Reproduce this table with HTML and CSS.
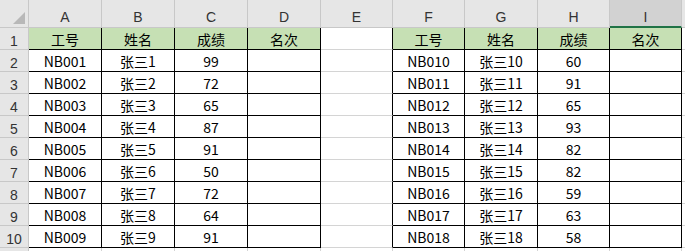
FILE: index.html
```html
<!DOCTYPE html>
<html>
<head>
<meta charset="utf-8">
<link rel="stylesheet" href="styles.css">
</head>
<body>
<div class="sheet">
  <div class="c ch corner"><svg class="tri" width="12" height="12" viewBox="0 0 12 12"><polygon points="12,0 12,12 0,12" fill="#b8b8b8"/></svg></div>
  <div class="c ch">A</div><div class="c ch">B</div><div class="c ch">C</div><div class="c ch">D</div><div class="c ch">E</div><div class="c ch">F</div><div class="c ch">G</div><div class="c ch">H</div><div class="c ch sel">I</div><div class="c ch"></div>

  <div class="c rh">1</div><div class="c t g">工号</div><div class="c t g">姓名</div><div class="c t g">成绩</div><div class="c t g">名次</div><div class="c er"></div><div class="c t g">工号</div><div class="c t g">姓名</div><div class="c t g">成绩</div><div class="c t g">名次</div><div class="c"></div>

  <div class="c rh">2</div><div class="c t">NB001</div><div class="c t">张三1</div><div class="c t">99</div><div class="c t"></div><div class="c er"></div><div class="c t">NB010</div><div class="c t">张三10</div><div class="c t">60</div><div class="c t"></div><div class="c"></div>
  <div class="c rh">3</div><div class="c t">NB002</div><div class="c t">张三2</div><div class="c t">72</div><div class="c t"></div><div class="c er"></div><div class="c t">NB011</div><div class="c t">张三11</div><div class="c t">91</div><div class="c t"></div><div class="c"></div>
  <div class="c rh">4</div><div class="c t">NB003</div><div class="c t">张三3</div><div class="c t">65</div><div class="c t"></div><div class="c er"></div><div class="c t">NB012</div><div class="c t">张三12</div><div class="c t">65</div><div class="c t"></div><div class="c"></div>
  <div class="c rh">5</div><div class="c t">NB004</div><div class="c t">张三4</div><div class="c t">87</div><div class="c t"></div><div class="c er"></div><div class="c t">NB013</div><div class="c t">张三13</div><div class="c t">93</div><div class="c t"></div><div class="c"></div>
  <div class="c rh">6</div><div class="c t">NB005</div><div class="c t">张三5</div><div class="c t">91</div><div class="c t"></div><div class="c er"></div><div class="c t">NB014</div><div class="c t">张三14</div><div class="c t">82</div><div class="c t"></div><div class="c"></div>
  <div class="c rh">7</div><div class="c t">NB006</div><div class="c t">张三6</div><div class="c t">50</div><div class="c t"></div><div class="c er"></div><div class="c t">NB015</div><div class="c t">张三15</div><div class="c t">82</div><div class="c t"></div><div class="c"></div>
  <div class="c rh">8</div><div class="c t">NB007</div><div class="c t">张三7</div><div class="c t">72</div><div class="c t"></div><div class="c er"></div><div class="c t">NB016</div><div class="c t">张三16</div><div class="c t">59</div><div class="c t"></div><div class="c"></div>
  <div class="c rh">9</div><div class="c t">NB008</div><div class="c t">张三8</div><div class="c t">64</div><div class="c t"></div><div class="c er"></div><div class="c t">NB017</div><div class="c t">张三17</div><div class="c t">63</div><div class="c t"></div><div class="c"></div>
  <div class="c rh">10</div><div class="c t">NB009</div><div class="c t">张三9</div><div class="c t">91</div><div class="c t"></div><div class="c er"></div><div class="c t">NB018</div><div class="c t">张三18</div><div class="c t">58</div><div class="c t"></div><div class="c"></div>

  <div class="c rh"></div><div class="c"></div><div class="c"></div><div class="c"></div><div class="c"></div><div class="c"></div><div class="c"></div><div class="c"></div><div class="c"></div><div class="c"></div><div class="c"></div>
</div>
</body>
</html>
```

FILE: styles.css
```css
html, body {
  margin: 0;
  padding: 0;
  background: #ffffff;
  overflow: hidden;
}
.sheet {
  display: grid;
  grid-template-columns: 29px 73px 73px 73px 73px 72px 72px 73px 72px 72px 10px;
  grid-template-rows: 28px repeat(10, 22px) 10px;
  width: 685px;
  height: 251px;
  overflow: hidden;
  font-family: "Noto Sans CJK SC", "Noto Sans", sans-serif;
  font-size: 14px;
  color: #000;
}
.c {
  box-sizing: border-box;
  border-right: 1px solid #d4d4d4;
  border-bottom: 1px solid #d4d4d4;
  display: flex;
  align-items: center;
  justify-content: center;
  line-height: 1;
  white-space: nowrap;
  overflow: hidden;
}
.ch {
  background: #e6e6e6;
  border-right-color: #c8c8c8;
  border-bottom-color: #c8c8c8;
  font-family: "Liberation Sans", Arial, sans-serif;
  font-size: 14px;
  color: #333;
  padding-top: 7px;
}
.corner {
  justify-content: flex-end;
  align-items: flex-end;
  padding: 0 3px 3px 0;
}
.tri {
  display: block;
}
.sel {
  background: #d2d2d2;
  border-bottom: 2px solid #217346;
  padding-top: 8px;
}
.rh {
  background: #e6e6e6;
  border-right-color: #c8c8c8;
  border-bottom-color: #c8c8c8;
  font-family: "Liberation Sans", Arial, sans-serif;
  font-size: 14px;
  color: #333;
  padding-top: 4px;
}
.t {
  border-right-color: #000;
  border-bottom-color: #000;
}
.er {
  border-right-color: #000;
}
.g {
  background: #c6e0b4;
}
```
